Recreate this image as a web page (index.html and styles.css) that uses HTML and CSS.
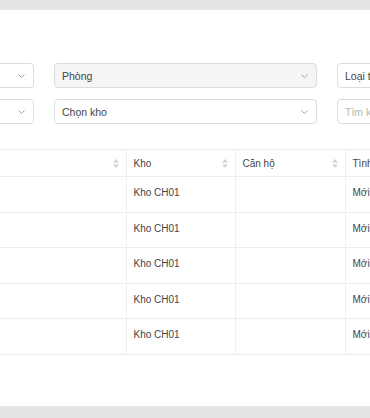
FILE: index.html
```html
<!DOCTYPE html>
<html lang="vi">
<head>
<meta charset="utf-8">
<link rel="stylesheet" href="styles.css">
</head>
<body>
<div class="panel">
  <div class="shift">
    <div class="filters">
      <div class="select"><span class="val"></span><svg class="chev" width="7" height="4" viewBox="0 0 7 4"><polyline points="0.5,0.5 3.5,3.5 6.5,0.5"/></svg></div>
      <div class="select disabled"><span class="val">Phòng</span><svg class="chev" width="7" height="4" viewBox="0 0 7 4"><polyline points="0.5,0.5 3.5,3.5 6.5,0.5"/></svg></div>
      <div class="select"><span class="val">Loại trạng thái</span><svg class="chev" width="7" height="4" viewBox="0 0 7 4"><polyline points="0.5,0.5 3.5,3.5 6.5,0.5"/></svg></div>
      <div class="select"><span class="val"></span></div>
      <div class="select"><span class="val"></span><svg class="chev" width="7" height="4" viewBox="0 0 7 4"><polyline points="0.5,0.5 3.5,3.5 6.5,0.5"/></svg></div>
      <div class="select"><span class="val">Chọn kho</span><svg class="chev" width="7" height="4" viewBox="0 0 7 4"><polyline points="0.5,0.5 3.5,3.5 6.5,0.5"/></svg></div>
      <div class="select"><span class="val ph">Tìm kiếm</span></div>
      <div class="select"><span class="val"></span></div>
    </div>

    <table class="grid">
      <colgroup>
        <col class="c1"><col class="c2"><col class="c3"><col class="c4">
      </colgroup>
      <thead>
        <tr>
          <th><div class="hd"><span></span><svg class="sort" width="6" height="9" viewBox="0 0 6 9"><polygon points="3,0 6,3.5 0,3.5"/><polygon points="0,5.5 6,5.5 3,9"/></svg></div></th>
          <th><div class="hd"><span>Kho</span><svg class="sort" width="6" height="9" viewBox="0 0 6 9"><polygon points="3,0 6,3.5 0,3.5"/><polygon points="0,5.5 6,5.5 3,9"/></svg></div></th>
          <th><div class="hd"><span>Căn hộ</span><svg class="sort" width="6" height="9" viewBox="0 0 6 9"><polygon points="3,0 6,3.5 0,3.5"/><polygon points="0,5.5 6,5.5 3,9"/></svg></div></th>
          <th><div class="hd"><span>Tình trạng</span></div></th>
        </tr>
      </thead>
      <tbody>
        <tr><td></td><td>Kho CH01</td><td></td><td>Mới</td></tr>
        <tr><td></td><td>Kho CH01</td><td></td><td>Mới</td></tr>
        <tr><td></td><td>Kho CH01</td><td></td><td>Mới</td></tr>
        <tr><td></td><td>Kho CH01</td><td></td><td>Mới</td></tr>
        <tr><td></td><td>Kho CH01</td><td></td><td>Mới</td></tr>
      </tbody>
    </table>
  </div>
</div>
</body>
</html>
```
FILE: styles.css
```css
html, body {
  margin: 0;
  padding: 0;
  overflow: hidden;
}
body {
  background: #e4e4e4;
  width: 370px;
  height: 418px;
  padding-top: 10px;
  box-sizing: border-box;
  font-family: "Liberation Sans", Arial, sans-serif;
  color: #444;
}
.panel {
  background: #fff;
  height: 396px;
  overflow: hidden;
}
.shift {
  margin-left: -229px;
  padding-top: 53px;
  width: 1100px;
}
.filters {
  display: grid;
  grid-template-columns: repeat(4, 263px);
  column-gap: 20px;
  row-gap: 11px;
}
.select {
  height: 25px;
  border: 1px solid #dcdcdc;
  border-radius: 4px;
  box-sizing: border-box;
  display: flex;
  align-items: center;
  justify-content: space-between;
  padding: 0 8px 0 7px;
  background: #fff;
  font-size: 10.5px;
  color: #444;
}
.select.disabled {
  background: #f5f5f5;
}
.val.ph {
  color: #b8b8b8;
}
.chev {
  display: block;
  flex: none;
}
.chev polyline {
  fill: none;
  stroke: #a0a0a0;
  stroke-width: 1;
}
.grid {
  margin-top: 25px;
  border-collapse: collapse;
  table-layout: fixed;
  width: 794px;
  font-size: 10px;
}
.c1 { width: 355px; }
.c2 { width: 109px; }
.c3 { width: 110px; }
.c4 { width: 220px; }
.grid th, .grid td {
  border-left: 1px solid #efeff3;
  border-bottom: 1px solid #ececf0;
  padding: 0;
  text-align: left;
  font-weight: normal;
  color: #444;
}
.grid th:first-child, .grid td:first-child {
  border-left: none;
}
.grid thead tr {
  border-top: 1px solid #ececf0;
}
.grid th {
  height: 27px;
  box-sizing: border-box;
}
.hd {
  display: flex;
  align-items: center;
  justify-content: space-between;
  padding: 0 7px 0 7px;
}
.sort polygon {
  fill: #d2d2d6;
}
.grid td {
  height: 35.6px;
  box-sizing: border-box;
  vertical-align: top;
  padding: 10px 7px 0;
}
```
